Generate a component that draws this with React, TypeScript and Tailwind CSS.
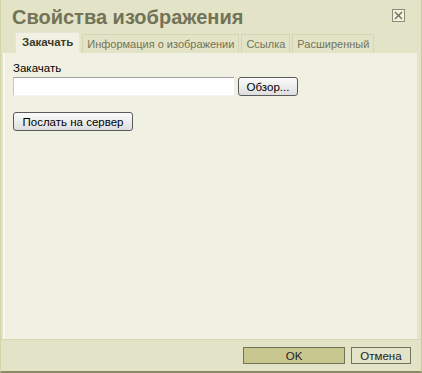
import React from "react";

const tabs = ["Закачать", "Информация о изображении", "Ссылка", "Расширенный"];

export default function App() {
  return (
    <div
      className="w-[422px] h-[373px] bg-[#e3e3c7] flex flex-col border-l border-[#d3d3a8] border-b-2 border-b-[#8a8a65] border-r border-r-[#c9c9a3]"
      style={{ fontFamily: '"Liberation Sans", Arial, sans-serif' }}
    >
      {/* title bar */}
      <div className="h-[34px] flex items-start justify-between pl-[11px] pr-[16px] pt-[4px]">
        <span className="text-[20px] leading-[26px] font-bold text-[#737357]">Свойства изображения</span>
        <span className="mt-[5px] w-[13px] h-[13px] border border-[#8c8c70] bg-[#f1f1e3] flex items-center justify-center">
          <svg width="9" height="9" viewBox="0 0 9 9">
            <path d="M1 1 L8 8 M8 1 L1 8" stroke="#6f6f58" strokeWidth="1.4" />
          </svg>
        </span>
      </div>

      {/* tabs */}
      <div className="h-[19px] flex items-end pl-[14px] gap-[2px]">
        {tabs.map((t, i) => (
          <div
            key={t}
            className={
              i === 0
                ? "h-[21px] px-[6px] flex items-center bg-[#f1f1e3] text-[11.5px] font-bold text-[#3b3b2a] border-t border-x border-[#e6e6d0]"
                : "h-[19px] px-[4px] flex items-center bg-[#e3e3c7] text-[11px] text-[#737357] border-t border-x border-[#d5d5b5]"
            }
          >
            {t}
          </div>
        ))}
      </div>

      {/* panel */}
      <div className="flex-1 ml-[2px] mr-[4px] bg-[#f1f1e3] border-l-2 border-[#f7f7ee] pl-[8px] pt-[8px]">
        <div className="text-[11.5px] leading-[14px] text-black">Закачать</div>
        <div className="flex items-center gap-[4px] mt-[2px]">
          <div className="w-[221px] h-[19px] bg-white border-t border-[#a0a0a0] border-l border-l-[#c8c8c8] border-b border-b-[#f4f4f4]" />
          <button className="w-[60px] h-[19px] rounded-[3px] border border-[#5a5a5a] bg-gradient-to-b from-[#fbfbfb] to-[#dedede] text-[11.5px] leading-[16px] text-black">
            Обзор...
          </button>
        </div>
        <button className="mt-[16px] w-[120px] h-[19px] rounded-[3px] border border-[#5a5a5a] bg-gradient-to-b from-[#fbfbfb] to-[#dedede] text-[11.5px] leading-[16px] text-black">
          Послать на сервер
        </button>
      </div>

      {/* footer */}
      <div className="h-[32px] border-t border-[#d8d8b8] flex items-center justify-end gap-[6px] pr-[10px]">
        <button className="w-[102px] h-[17px] bg-[#c7c78f] border border-[#737357] text-[11.5px] leading-[14px] text-[#222]">
          OK
        </button>
        <button className="w-[60px] h-[17px] bg-[#e3e3c7] border border-[#737357] text-[11.5px] leading-[14px] text-[#222]">
          Отмена
        </button>
      </div>
    </div>
  );
}
